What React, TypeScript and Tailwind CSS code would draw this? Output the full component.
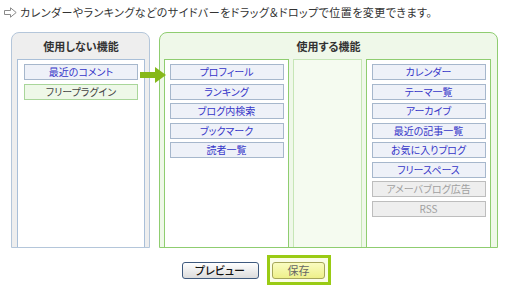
import React from "react";

const font = {
  fontFamily: '"Noto Sans CJK JP", "Noto Sans", sans-serif',
};

function Item({ label, kind = "blue" }: { label: string; kind?: "blue" | "green" | "gray" }) {
  const cls =
    kind === "blue"
      ? "bg-[#eef1f8] border-[#a6b7cc] text-[#3535c8]"
      : kind === "green"
      ? "bg-[#eef8e8] border-[#a9d69a] text-[#444444]"
      : "bg-[#eeeeee] border-[#bdbdbd] text-[#a0a0a0]";
  return (
    <div
      className={`h-[16px] w-[114px] border flex items-center justify-center text-[10px] leading-none ${cls}`}
      style={{ fontFeatureSettings: '"palt"' }}
    >
      {label}
    </div>
  );
}

export default function App() {
  const col1 = ["プロフィール", "ランキング", "ブログ内検索", "ブックマーク", "読者一覧"];
  const col3 = ["カレンダー", "テーマ一覧", "アーカイブ", "最近の記事一覧", "お気に入りブログ", "フリースペース"];
  return (
    <div className="w-[510px] h-[290px] bg-white relative overflow-hidden" style={font}>
      <div className="flex items-center h-[24px] pl-[4px] gap-[3px]">
        <svg width="13" height="11" viewBox="0 0 13 11">
          <path
            d="M0.5 3.5 H6.5 V0.8 L12.2 5.5 L6.5 10.2 V7.5 H0.5 Z"
            fill="white"
            stroke="#8a8a8a"
            strokeWidth="1"
            strokeLinejoin="round"
          />
        </svg>
        <span
          className="text-[11px] text-[#333] leading-none tracking-[0.45px]"
          style={{ fontFeatureSettings: '"palt"' }}
        >
          カレンダーやランキングなどのサイドバーをドラッグ＆ドロップで位置を変更できます。
        </span>
      </div>

      <div className="flex pl-[11px] mt-[8px] gap-[9px]">
        {/* left panel */}
        <div className="w-[139px] h-[216px] border border-[#b4c6da] rounded-t-[8px] bg-[#eeeeee] flex flex-col pl-[5px] pr-[4px]">
          <div
            className="h-[26px] flex items-center justify-center text-[11px] font-bold text-[#333]"
            style={{ fontFeatureSettings: '"palt"' }}
          >
            使用しない機能
          </div>
          <div className="flex-1 border border-b-0 border-[#a9bfd8] bg-white flex flex-col items-center pt-[4px] gap-[4px]">
            <Item label="最近のコメント" />
            <Item label="フリープラグイン" kind="green" />
          </div>
        </div>

        {/* right panel */}
        <div className="w-[339px] h-[216px] border border-[#8fcd70] rounded-t-[8px] bg-[#eff8e9] flex flex-col">
          <div
            className="h-[26px] flex items-center justify-center text-[11px] font-bold text-[#333]"
            style={{ fontFeatureSettings: '"palt"' }}
          >
            使用する機能
          </div>
          <div className="flex-1 flex pl-[4px] pr-[6px] gap-[4px]">
            <div className="w-[125px] border border-b-0 border-[#8fcd70] bg-white flex flex-col items-center pt-[4px] gap-[3.5px]">
              {col1.map((l) => (
                <Item key={l} label={l} />
              ))}
            </div>
            <div className="w-[69px] border border-b-0 border-[#c6e6b6] bg-[#f5fbf0]" />
            <div className="w-[125px] border border-b-0 border-[#8fcd70] bg-white flex flex-col items-center pt-[4px] gap-[3.5px]">
              {col3.map((l) => (
                <Item key={l} label={l} />
              ))}
              <Item label="アメーバブログ広告" kind="gray" />
              <Item label="RSS" kind="gray" />
            </div>
          </div>
        </div>
      </div>

      {/* green arrow */}
      <svg className="absolute left-[140px] top-[67px]" width="27" height="16" viewBox="0 0 27 16">
        <path d="M0 5 H15 V0 L26 8 L15 16 V11 H0 Z" fill="#86b81a" />
      </svg>

      {/* buttons */}
      <div className="flex justify-center items-center gap-[8px] mt-[7px] pl-[2px]">
        <button
          className="w-[77px] h-[17px] rounded-[3px] border border-[#3f5a7e] bg-gradient-to-b from-white to-[#dcdcdc] text-[11px] leading-none text-[#111] font-medium"
          style={{ ...font, fontFeatureSettings: '"palt"' }}
        >
          プレビュー
        </button>
        <div className="w-[64px] h-[30px] border-[3px] border-[#9acb14] bg-[#fbfde8] flex items-center justify-center">
          <button
            className="w-[53px] h-[17px] rounded-[3px] border border-[#a6a65a] bg-gradient-to-b from-[#fafcc0] to-[#eef08a] text-[11px] leading-none text-[#666]"
            style={font}
          >
            保存
          </button>
        </div>
      </div>
    </div>
  );
}
